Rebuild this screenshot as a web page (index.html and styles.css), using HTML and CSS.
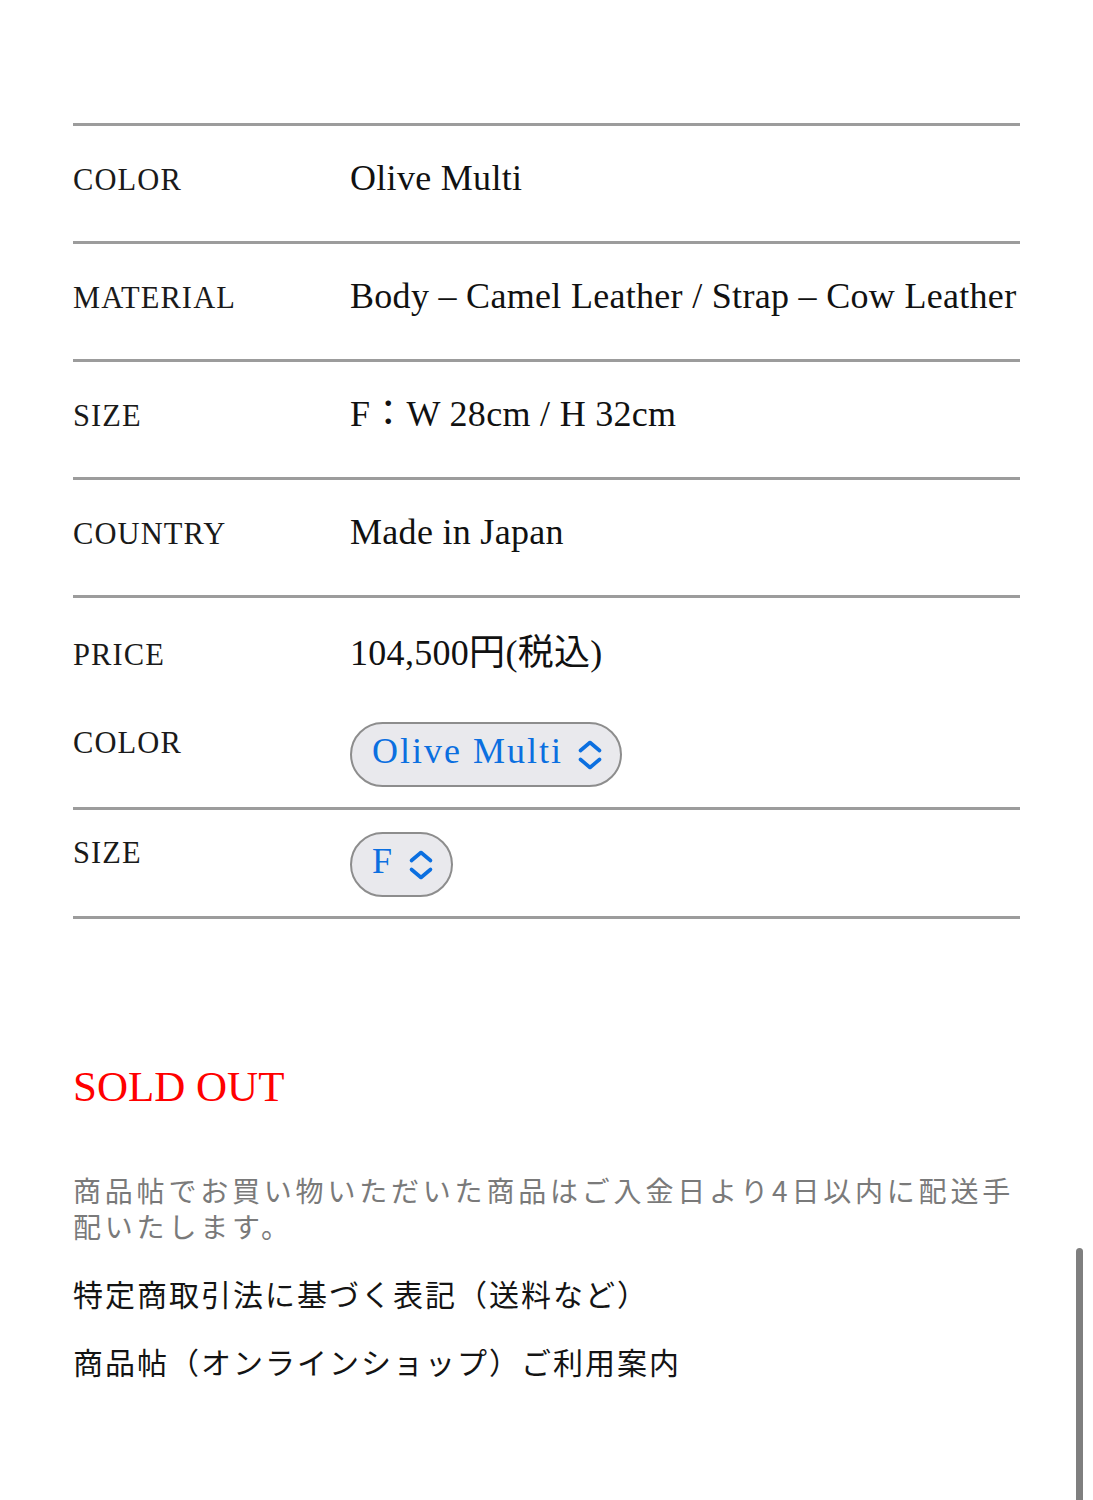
FILE: index.html
```html
<!DOCTYPE html>
<html lang="ja">
<head>
<meta charset="utf-8">
<title>商品詳細</title>
<link rel="stylesheet" href="styles.css">
</head>
<body>
<main class="page">
  <section class="specs">
    <div class="row">
      <div class="label">COLOR</div>
      <div class="value">Olive Multi</div>
    </div>
    <div class="row">
      <div class="label">MATERIAL</div>
      <div class="value">Body – Camel Leather / Strap – Cow Leather</div>
    </div>
    <div class="row">
      <div class="label">SIZE</div>
      <div class="value">F：W 28cm / H 32cm</div>
    </div>
    <div class="row">
      <div class="label">COUNTRY</div>
      <div class="value">Made in Japan</div>
    </div>
    <div class="order">
      <div class="price-row">
        <div class="label">PRICE</div>
        <div class="value">104,500円(税込)</div>
      </div>
      <div class="pick-row pick-row-first">
        <div class="label label-top">COLOR</div>
        <div class="picker">
          <span class="picker-text">Olive Multi</span>
          <svg class="chev" width="26" height="32" viewBox="0 0 26 32" aria-hidden="true"><path d="M3.5 11.5 L13 3.5 L22.5 11.5 M3.5 20.5 L13 28.5 L22.5 20.5" fill="none" stroke="currentColor" stroke-width="3.6" stroke-linecap="round" stroke-linejoin="round"/></svg>
        </div>
      </div>
    </div>
    <div class="pick-row pick-row-size">
      <div class="label label-top">SIZE</div>
      <div class="picker">
        <span class="picker-text">F</span>
        <svg class="chev" width="26" height="32" viewBox="0 0 26 32" aria-hidden="true"><path d="M3.5 11.5 L13 3.5 L22.5 11.5 M3.5 20.5 L13 28.5 L22.5 20.5" fill="none" stroke="currentColor" stroke-width="3.6" stroke-linecap="round" stroke-linejoin="round"/></svg>
      </div>
    </div>
  </section>

  <p class="soldout">SOLD OUT</p>

  <p class="note">商品帖でお買い物いただいた商品はご入金日より4日以内に配送手配いたします。</p>
  <p class="link link-first">特定商取引法に基づく表記（送料など）</p>
  <p class="link">商品帖（オンラインショップ）ご利用案内</p>
</main>
<div class="scrollbar"></div>
</body>
</html>
```

FILE: styles.css
```css
html, body {
  margin: 0;
  padding: 0;
  background: #ffffff;
}

body {
  font-family: "Liberation Serif", "Noto Sans CJK JP", serif;
  color: #161616;
  overflow: hidden;
}

.page {
  padding: 123px 73px 0 73px;
}

.specs {
  width: 947px;
}

.row {
  display: flex;
  align-items: baseline;
  border-top: 3px solid #9c9c9c;
  padding: 30px 0 41px 0;
}

.label {
  flex: none;
  width: 277px;
  font-size: 30.5px;
  line-height: 40px;
  letter-spacing: 1.1px;
  color: #1a1a1a;
}

.label-top {
  margin-top: 1px;
}

.value {
  font-size: 36px;
  line-height: 44px;
  letter-spacing: 0.3px;
  color: #111111;
  white-space: nowrap;
}

.order {
  border-top: 3px solid #9c9c9c;
}

.price-row {
  display: flex;
  align-items: baseline;
  padding-top: 33px;
}

.pick-row {
  display: flex;
  align-items: flex-start;
}

.pick-row-first {
  padding: 47px 0 20px 0;
}

.pick-row-size {
  border-top: 3px solid #9c9c9c;
  border-bottom: 3px solid #9c9c9c;
  padding: 22px 0 19px 0;
}

.picker {
  display: inline-flex;
  align-items: center;
  gap: 14px;
  box-sizing: border-box;
  height: 65px;
  padding: 0 17px 0 20px;
  border: 2px solid #8d8d8d;
  border-radius: 33px;
  background: #e9e9ed;
  color: #0b6fe0;
}

.picker-text {
  font-size: 36px;
  line-height: 44px;
  letter-spacing: 2px;
  margin-bottom: 7px;
  white-space: nowrap;
}

.chev {
  display: block;
  flex: none;
}

.soldout {
  margin: 142px 0 0 0;
  font-size: 43px;
  line-height: 52px;
  color: #ff0000;
}

.note {
  margin: 59px 0 0 0;
  width: 947px;
  font-family: "Noto Sans CJK JP", sans-serif;
  font-size: 28px;
  line-height: 36px;
  letter-spacing: 3.8px;
  color: #7a7a7a;
}

.link {
  margin: 28px 0 0 0;
  font-family: "Noto Sans CJK JP", sans-serif;
  font-size: 30px;
  line-height: 40px;
  letter-spacing: 2px;
  color: #141414;
}

.link-first {
  margin-top: 29px;
}

.scrollbar {
  position: fixed;
  right: 10px;
  top: 1248px;
  width: 7px;
  height: 270px;
  border-radius: 4px;
  background: #7f7f7f;
}
```
